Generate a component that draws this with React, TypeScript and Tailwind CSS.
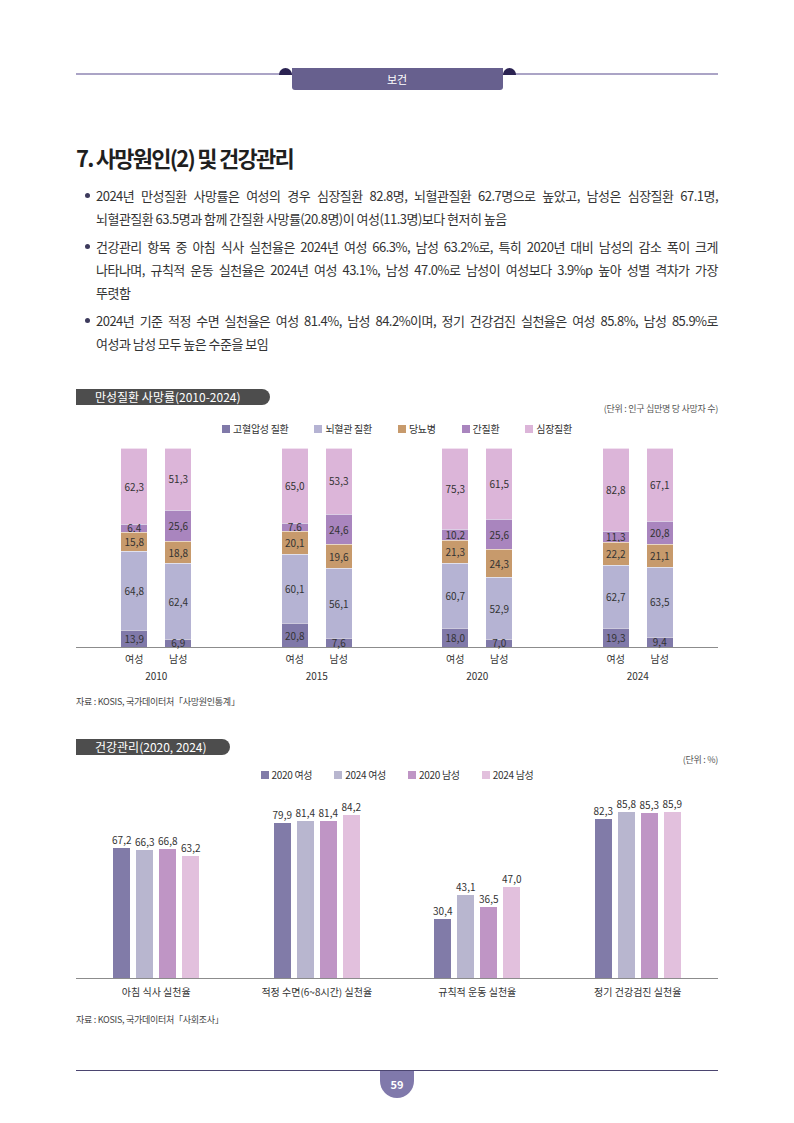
import React from 'react';

const causeColors = ['#8079a9', '#b5b3d3', '#c79a6c', '#a985be', '#dcb5d9'];
const causeNames = ['고혈압성 질환', '뇌혈관 질환', '당뇨병', '간질환', '심장질환'];

const deathData = [
  { year: '2010', f: [13.9, 64.8, 15.8, 6.4, 62.3], m: [6.9, 62.4, 18.8, 25.6, 51.3] },
  { year: '2015', f: [20.8, 60.1, 20.1, 7.6, 65.0], m: [7.6, 56.1, 19.6, 24.6, 53.3] },
  { year: '2020', f: [18.0, 60.7, 21.3, 10.2, 75.3], m: [7.0, 52.9, 24.3, 25.6, 61.5] },
  { year: '2024', f: [19.3, 62.7, 22.2, 11.3, 82.8], m: [9.4, 63.5, 21.1, 20.8, 67.1] },
];

const careColors = ['#817ba8', '#b8b6cf', '#bf95c5', '#e2c0dd'];
const careNames = ['2020 여성', '2024 여성', '2020 남성', '2024 남성'];

const careData = [
  { label: '아침 식사 실천율', vals: [67.2, 66.3, 66.8, 63.2] },
  { label: '적정 수면(6~8시간) 실천율', vals: [79.9, 81.4, 81.4, 84.2] },
  { label: '규칙적 운동 실천율', vals: [30.4, 43.1, 36.5, 47.0] },
  { label: '정기 건강검진 실천율', vals: [82.3, 85.8, 85.3, 85.9] },
];

const fmt = (v: number) => v.toFixed(1).replace('.', ',');

const bullets: string[][] = [
  [
    '2024년 만성질환 사망률은 여성의 경우 심장질환 82.8명, 뇌혈관질환 62.7명으로 높았고, 남성은 심장질환 67.1명,',
    '뇌혈관질환 63.5명과 함께 간질환 사망률(20.8명)이 여성(11.3명)보다 현저히 높음',
  ],
  [
    '건강관리 항목 중 아침 식사 실천율은 2024년 여성 66.3%, 남성 63.2%로, 특히 2020년 대비 남성의 감소 폭이 크게',
    '나타나며, 규칙적 운동 실천율은 2024년 여성 43.1%, 남성 47.0%로 남성이 여성보다 3.9%p 높아 성별 격차가 가장',
    '뚜렷함',
  ],
  [
    '2024년 기준 적정 수면 실천율은 여성 81.4%, 남성 84.2%이며, 정기 건강검진 실천율은 여성 85.8%, 남성 85.9%로',
    '여성과 남성 모두 높은 수준을 보임',
  ],
];

const StackBar: React.FC<{ vals: number[] }> = ({ vals }) => {
  const total = vals.reduce((a, b) => a + b, 0);
  return (
    <div className="flex h-[199px] w-[26px] flex-col-reverse">
      {vals.map((v, i) => (
        <div
          key={i}
          className="flex items-center justify-center border-t border-white/60 text-[10px] leading-none text-[#333]"
          style={{ height: `${(v / total) * 199}px`, backgroundColor: causeColors[i] }}
        >
          <span className="whitespace-nowrap">{fmt(v)}</span>
        </div>
      ))}
    </div>
  );
};

const ChartTitle: React.FC<{ text: string; width: string }> = ({ text, width }) => (
  <div
    className={`flex h-[16px] items-center rounded-r-full bg-[#4d4d4d] pl-[19px] text-[12px] leading-none text-white ${width}`}
  >
    {text}
  </div>
);

const App: React.FC = () => {
  return (
    <div className="relative h-[1123px] w-[794px] bg-white font-['Noto_Sans_CJK_KR',sans-serif] text-[#333]">
      {/* header */}
      <div className="relative h-[90px]">
        <div className="absolute left-[76px] right-[76px] top-[73px] h-[2px] bg-[#aba4c6]" />
        <div className="relative flex justify-center pt-[68px]">
          <div className="flex items-start">
            <div className="h-[7px] w-[13px] rounded-t-full bg-[#2b2352]" />
            <div className="flex h-[22px] w-[211px] items-center justify-center rounded-b-[3px] bg-[#67608e] text-[11px] leading-none text-white">
              보건
            </div>
            <div className="h-[7px] w-[13px] rounded-t-full bg-[#2b2352]" />
          </div>
        </div>
      </div>

      <div className="px-[76px]">
        <h1 className="mt-[53px] text-[22px] font-bold leading-[28px] tracking-[-0.08em] text-[#1f1f1f]">
          7. 사망원인(2) 및 건강관리
        </h1>

        <div className="mt-[13px] pl-[9px]">
          {bullets.map((lines, bi) => (
            <div key={bi} className="mb-[5px] flex gap-[6px]">
              <div className="mt-[9px] h-[5px] w-[5px] shrink-0 rounded-full bg-[#3d3a5c]" />
              <div className="flex-1 text-[13px] leading-[23px] tracking-[-0.04em]">
                {lines.map((l, li) => (
                  <span
                    key={li}
                    className={
                      li < lines.length - 1
                        ? 'block text-justify [text-align-last:justify]'
                        : 'block text-left'
                    }
                  >
                    {l}
                  </span>
                ))}
              </div>
            </div>
          ))}
        </div>

        {/* chart 1 */}
        <div className="mt-[34px]">
          <ChartTitle text="만성질환 사망률(2010-2024)" width="w-[194px]" />
          <div className="-mt-[2px] text-right text-[9px] leading-[12px] tracking-[-0.03em] text-[#555]">
            (단위 : 인구 십만명 당 사망자 수)
          </div>
          <div className="mt-[7px] flex justify-center gap-[26px] text-[10px] leading-[14px] tracking-[-0.03em]">
            {causeNames.map((n, i) => (
              <div key={n} className="flex items-center gap-[3px]">
                <span className="h-[8px] w-[8px]" style={{ backgroundColor: causeColors[i] }} />
                <span>{n}</span>
              </div>
            ))}
          </div>
          <div className="mt-[12px] grid grid-cols-4 border-b-[1.5px] border-[#8c8c8c]">
            {deathData.map((g) => (
              <div key={g.year} className="flex h-[199px] items-end justify-center gap-[18px]">
                <StackBar vals={g.f} />
                <StackBar vals={g.m} />
              </div>
            ))}
          </div>
          <div className="mt-[4px] grid grid-cols-4 text-[10px] leading-[14px]">
            {deathData.map((g) => (
              <div key={g.year} className="flex flex-col items-center">
                <div className="flex gap-[18px]">
                  <span className="w-[26px] whitespace-nowrap text-center">여성</span>
                  <span className="w-[26px] whitespace-nowrap text-center">남성</span>
                </div>
                <div className="mt-[3px]">{g.year}</div>
              </div>
            ))}
          </div>
          <div className="mt-[13px] text-[9px] leading-[12px] tracking-[-0.03em] text-[#444]">
            자료 : KOSIS, 국가데이터처「사망원인통계」
          </div>
        </div>

        {/* chart 2 */}
        <div className="mt-[31px]">
          <ChartTitle text="건강관리(2020, 2024)" width="w-[154px]" />
          <div className="-mt-[1px] text-right text-[9px] leading-[12px] tracking-[-0.03em] text-[#555]">
            (단위 : %)
          </div>
          <div className="mt-[2px] flex justify-center gap-[22px] text-[10px] leading-[14px] tracking-[-0.03em]">
            {careNames.map((n, i) => (
              <div key={n} className="flex items-center gap-[3px]">
                <span className="h-[8px] w-[8px]" style={{ backgroundColor: careColors[i] }} />
                <span>{n}</span>
              </div>
            ))}
          </div>
          <div className="grid h-[197px] grid-cols-4 border-b-[1.5px] border-[#8c8c8c]">
            {careData.map((g) => (
              <div key={g.label} className="flex items-end justify-center gap-[6px]">
                {g.vals.map((v, i) => (
                  <div key={i} className="flex w-[17px] flex-col items-center">
                    <span className="mb-[3px] whitespace-nowrap text-[10px] leading-none text-[#333]">
                      {fmt(v)}
                    </span>
                    <div
                      className="w-[17px]"
                      style={{ height: `${v * 1.935}px`, backgroundColor: careColors[i] }}
                    />
                  </div>
                ))}
              </div>
            ))}
          </div>
          <div className="mt-[6px] grid grid-cols-4 text-center text-[10px] leading-[14px]">
            {careData.map((g) => (
              <div key={g.label}>{g.label}</div>
            ))}
          </div>
          <div className="mt-[15px] text-[9px] leading-[12px] tracking-[-0.03em] text-[#444]">
            자료 : KOSIS, 국가데이터처「사회조사」
          </div>
        </div>

        {/* footer */}
        <div className="mt-[44px] flex justify-center border-t border-[#4b4570]">
          <div className="flex h-[27px] w-[34px] items-center justify-center rounded-b-full bg-[#8079ab] text-[11px] font-bold leading-none text-white">
            59
          </div>
        </div>
      </div>
    </div>
  );
};

export default App;
